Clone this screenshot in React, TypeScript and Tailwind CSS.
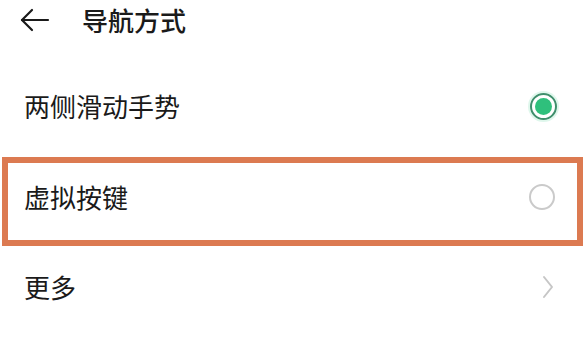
import React from "react";

const FONT = { fontFamily: '"Noto Sans CJK SC", "Noto Sans", sans-serif' };

function BackArrow() {
  return (
    <svg width="30" height="24" viewBox="0 0 30 24" fill="none" stroke="#1a1a1a" strokeWidth="2.2" strokeLinecap="round" strokeLinejoin="round">
      <path d="M2 12H28" />
      <path d="M12 2L2 12L12 22" />
    </svg>
  );
}

function RadioOn() {
  return (
    <span className="flex h-[27px] w-[27px] items-center justify-center rounded-full border-[2px] border-[#3f8f6c] shadow-[0_0_0_2px_#dff7ec]">
      <span className="h-[17px] w-[17px] rounded-full bg-[#2fc07c]" />
    </span>
  );
}

function RadioOff() {
  return <span className="block h-[26px] w-[26px] rounded-full border-[2px] border-[#cacaca]" />;
}

function Chevron() {
  return (
    <svg width="12" height="24" viewBox="0 0 12 24" fill="none" stroke="#c6c6c6" strokeWidth="2" strokeLinecap="round" strokeLinejoin="round">
      <path d="M2 2L10 12L2 22" />
    </svg>
  );
}

export default function App() {
  return (
    <div className="h-[351px] w-[586px] overflow-hidden bg-white text-[#1a1a1a]" style={FONT}>
      <div className="flex h-[40px] items-center pl-[20px]">
        <BackArrow />
        <span className="ml-[32px] text-[26px] font-medium leading-none">导航方式</span>
      </div>

      <div className="mt-[22px] flex h-[88px] items-center justify-between pl-[24px] pr-[29px]">
        <span className="text-[26px] leading-none">两侧滑动手势</span>
        <RadioOn />
      </div>

      <div className="ml-[2px] mt-[7px] flex h-[89px] w-[581px] items-center justify-between border-[6px] border-[#dc7a51] pb-[10px] pl-[16px] pr-[22px]">
        <span className="text-[26px] leading-none">虚拟按键</span>
        <RadioOff />
      </div>

      <div className="flex h-[82px] items-center justify-between pl-[24px] pr-[32px]">
        <span className="text-[26px] leading-none">更多</span>
        <Chevron />
      </div>
    </div>
  );
}
